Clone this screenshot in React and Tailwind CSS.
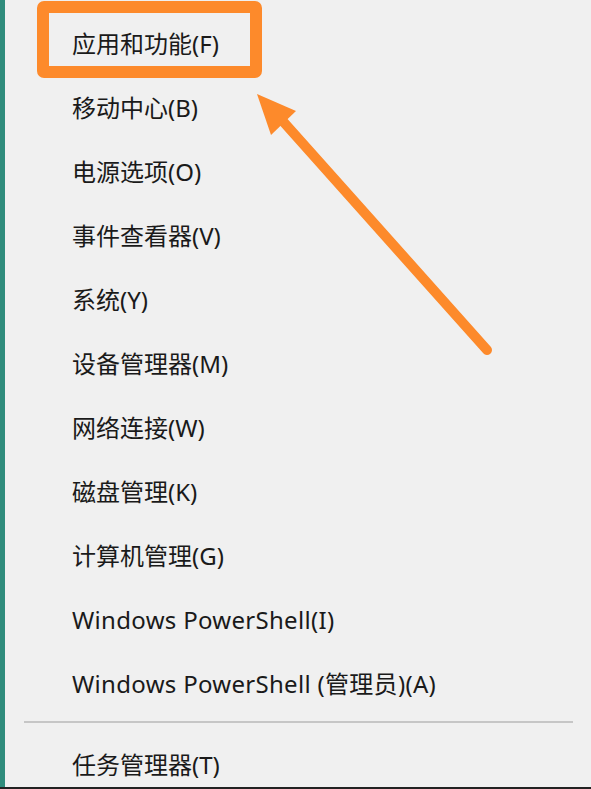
import React from "react";

const items = [
  { t: "应用和功能(F)" },
  { t: "移动中心(B)" },
  { t: "电源选项(O)" },
  { t: "事件查看器(V)" },
  { t: "系统(Y)" },
  { t: "设备管理器(M)" },
  { t: "网络连接(W)" },
  { t: "磁盘管理(K)" },
  { t: "计算机管理(G)" },
  { t: "Windows PowerShell(I)", latin: true },
  { t: "Windows PowerShell (管理员)(A)", latin: true },
];

export default function App() {
  return (
    <div
      className="relative w-[591px] h-[789px] overflow-hidden bg-[#f0f0f0] flex flex-col text-[#1a1a1a]"
      style={{ fontFamily: '"Noto Sans", "Noto Sans CJK SC", sans-serif' }}
    >
      <div className="flex flex-1 min-h-0 overflow-hidden">
        <div className="w-[5px] shrink-0 bg-[#2f8c7c]" />
        <div className="flex-1 flex flex-col pt-[12px]">
          {items.map(({ t, latin }) => (
            <div
              key={t}
              className={
                latin
                  ? "h-[64px] shrink-0 flex items-center pl-[67px] text-[24px] leading-none tracking-[0.3px]"
                  : "h-[64px] shrink-0 flex items-center pl-[67px] text-[24px] leading-none"
              }
            >
              {t}
            </div>
          ))}
          <div className="shrink-0 mt-[5px] mb-[10px] ml-[19px] mr-[18px] h-[2px] bg-[#c6c6c6]" />
          <div className="h-[64px] shrink-0 flex items-center pl-[67px] text-[24px] leading-none">
            任务管理器(T)
          </div>
        </div>
      </div>
      <div className="h-[2px] shrink-0 bg-[#222222]" />

      <div className="absolute left-[37px] top-[1px] w-[225px] h-[77px] border-[12px] border-[#fd8a2b] rounded-[7px]" />

      <svg className="absolute left-0 top-0" width="591" height="789" viewBox="0 0 591 789">
        <line x1="280" y1="118" x2="487" y2="350" stroke="#fd8a2b" strokeWidth="10" strokeLinecap="round" />
        <polygon points="257,94 296,111 271,135" fill="#fd8a2b" />
      </svg>
    </div>
  );
}
